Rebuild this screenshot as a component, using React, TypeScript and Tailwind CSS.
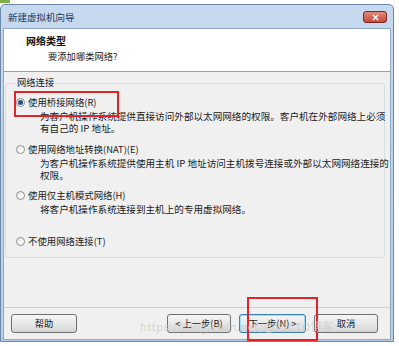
import { X } from "lucide-react";

const font = { fontFamily: '"Noto Sans CJK SC", "Liberation Sans", sans-serif' };

function Radio({ checked }: { checked?: boolean }) {
  return (
    <span className="w-[9px] h-[9px] rounded-full border border-[#8e8f8f] bg-gradient-to-br from-[#e8e8e8] to-[#ffffff] flex items-center justify-center shrink-0">
      {checked && <span className="w-[5px] h-[5px] rounded-full bg-[#2a4f8a]" />}
    </span>
  );
}

function Option({
  label,
  checked,
  lines,
}: {
  label: string;
  checked?: boolean;
  lines?: string[];
}) {
  return (
    <div>
      <div className="flex items-center gap-[3px] h-[12px]">
        <Radio checked={checked} />
        <span className="text-[9.4px] leading-[12px] text-[#1a1a1a]">{label}</span>
      </div>
      {lines && (
        <div className="pl-[24px] mt-[2px] text-[9.6px] leading-[12px] text-[#1a1a1a]">
          {lines.map((l) => (
            <div key={l} className="whitespace-nowrap">
              {l}
            </div>
          ))}
        </div>
      )}
    </div>
  );
}

function WinButton({ children, focused }: { children: React.ReactNode; focused?: boolean }) {
  return (
    <div
      className={
        "h-[19px] rounded-[3px] flex items-center justify-center text-[9.3px] text-[#1a1a1a] bg-gradient-to-b from-[#f6f6f6] via-[#e8e8e8] to-[#d6d6d6] border " +
        (focused ? "border-[#3c7fb1] shadow-[inset_0_0_0_1px_#9fe0f8]" : "border-[#707070]")
      }
    >
      {children}
    </div>
  );
}

export default function App() {
  return (
    <div className="relative w-[399px] h-[346px] bg-white overflow-hidden" style={font}>
      {/* top strip */}
      <div className="h-[4px] flex">
        <div className="w-[10px] h-[3px] bg-[#7fb04a]" />
      </div>

      {/* window */}
      <div className="w-[394px] h-[338px] rounded-t-[5px] bg-gradient-to-b from-[#c6d9ef] to-[#b7cfe8] border border-[#6d87a8] flex flex-col px-[2px] pb-[1px]">
        {/* title bar */}
        <div className="h-[23px] flex items-center justify-between shrink-0">
          <span className="pl-[5px] pt-[2px] text-[9.5px] text-[#1e3a5c]">新建虚拟机向导</span>
          <div className="mr-[4px] mt-[1px] w-[24px] h-[12px] rounded-[3px] bg-gradient-to-b from-[#e08a7c] to-[#c4463a] border border-[#7a2a22] flex items-center justify-center">
            <X className="w-[9px] h-[9px] text-white" strokeWidth={3.5} />
          </div>
        </div>

        {/* client area */}
        <div className="flex-1 flex flex-col border border-[#8fa8c4] bg-[#f0f0f0]">
          {/* header */}
          <div className="h-[43px] bg-white border-b border-[#a0a0a0] pl-[22px] pt-[6px] shrink-0">
            <div className="text-[10px] font-bold leading-[12px] text-[#111]">网络类型</div>
            <div className="pl-[22px] mt-[3px] text-[9.3px] leading-[12px] text-[#222]">要添加哪类网络?</div>
          </div>

          {/* body */}
          <div className="flex-1 px-[1px] pt-[6px]">
            <div className="relative mt-[5px] h-[175px] border border-[#d5dfe5] rounded-[3px] mr-[4px]">
              <span className="absolute -top-[8px] left-[10px] bg-[#f0f0f0] px-[1px] text-[9.3px] leading-[12px] text-[#1a1a1a]">
                网络连接
              </span>
              <div className="pl-[10px] pt-[12px] flex flex-col">
                <Option
                  checked
                  label="使用桥接网络(R)"
                  lines={["为客户机操作系统提供直接访问外部以太网网络的权限。客户机在外部网络上必须", "有自己的 IP 地址。"]}
                />
                <div className="h-[9px]" />
                <Option
                  label="使用网络地址转换(NAT)(E)"
                  lines={["为客户机操作系统提供使用主机 IP 地址访问主机拨号连接或外部以太网网络连接的", "权限。"]}
                />
                <div className="h-[8px]" />
                <Option label="使用仅主机模式网络(H)" lines={["将客户机操作系统连接到主机上的专用虚拟网络。"]} />
                <div className="h-[20px]" />
                <Option label="不使用网络连接(T)" />
              </div>
            </div>
          </div>

          {/* footer */}
          <div className="h-[32px] border-t border-[#d0d0d0] flex items-center px-[7px] shrink-0">
            <div className="w-[66px]">
              <WinButton>帮助</WinButton>
            </div>
            <div className="flex-1" />
            <div className="flex gap-[8px] mr-[5px]">
              <div className="w-[64px]">
                <WinButton>&lt; 上一步(B)</WinButton>
              </div>
              <div className="w-[67px]">
                <WinButton focused>下一步(N) &gt;</WinButton>
              </div>
              <div className="w-[64px]">
                <WinButton>取消</WinButton>
              </div>
            </div>
          </div>
        </div>
      </div>

      {/* annotation boxes */}
      <div className="absolute left-[14px] top-[91px] w-[105px] h-[26px] border-2 border-[#e0242a]" />
      <div className="absolute left-[247px] top-[297px] w-[71px] h-[44px] border-2 border-[#e0242a]" />

      {/* watermark */}
      <div className="absolute left-[140px] top-[318px] text-[11px] text-[#c8c8c8]/70 whitespace-nowrap tracking-[0.5px]">
        https://blog.csdn.net/@51CTO博客
      </div>
    </div>
  );
}
